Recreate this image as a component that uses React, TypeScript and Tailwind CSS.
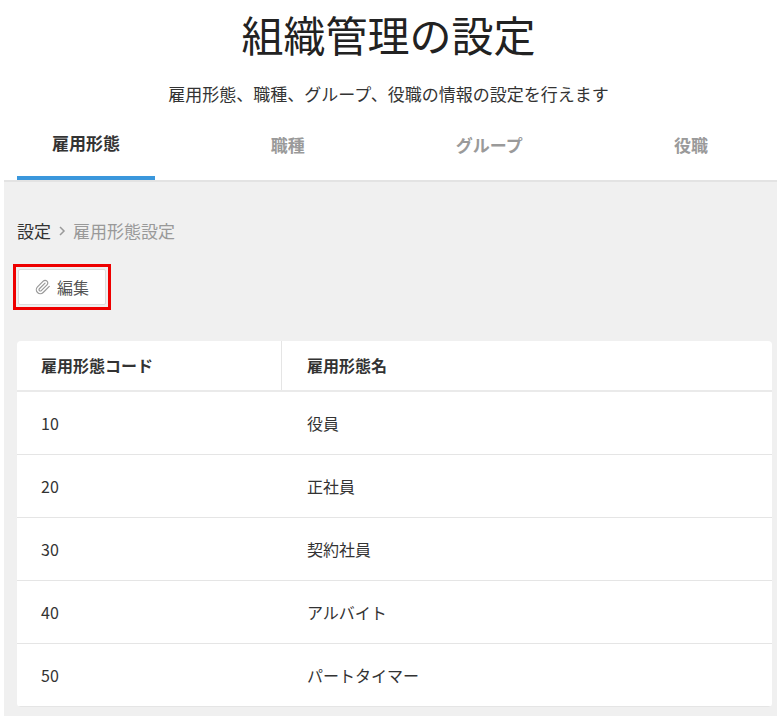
const rows = [
  ["10", "役員"],
  ["20", "正社員"],
  ["30", "契約社員"],
  ["40", "アルバイト"],
  ["50", "パートタイマー"],
];

const tabs = ["雇用形態", "職種", "グループ", "役職"];

export default function App() {
  return (
    <div
      className="h-[716px] w-[777px] overflow-hidden bg-white text-[#333]"
      style={{ fontFamily: '"Noto Sans CJK JP", "Noto Sans", sans-serif' }}
    >
      <h1 className="pt-[8px] text-center text-[42px] leading-[52px] text-[#222]">組織管理の設定</h1>
      <p className="mt-[22px] text-center text-[17px] leading-[24px] text-[#333]">
        雇用形態、職種、グループ、役職の情報の設定を行えます
      </p>
      <div className="mt-[14px] flex justify-between px-[17px]">
        {tabs.map((t, i) => (
          <div
            key={t}
            className={`flex h-[60px] w-[138px] items-center justify-center pb-[10px] text-[17px] font-bold ${
              i === 0 ? "border-b-[4px] border-[#3a97dc] text-[#333]" : "text-[#9a9a9a]"
            }`}
          >
            {t}
          </div>
        ))}
      </div>
      <div className="ml-[4px] h-full border-t-2 border-[#e3e3e3] bg-[#f0f0f0] pl-[9px]">
        <div className="ml-[4px] mt-[36px] flex items-center gap-[6px] text-[17px]">
          <span className="text-[#333]">設定</span>
          <svg width="10" height="14" viewBox="0 0 10 14" fill="none" stroke="#999" strokeWidth="1.5">
            <path d="M3 3l4 4-4 4" />
          </svg>
          <span className="text-[#999]">雇用形態設定</span>
        </div>
        <div className="mt-[20px] inline-block border-[3px] border-[#ee0000] p-[2px]">
          <button className="flex h-[36px] w-[88px] items-center justify-center gap-[6px] rounded-[2px] border border-[#ddd] bg-white text-[16px] text-[#555]">
            <svg width="16" height="16" viewBox="0 0 24 24" fill="none" stroke="#999" strokeWidth="1.8" strokeLinecap="round" strokeLinejoin="round">
              <path d="m21.44 11.05-9.19 9.19a6 6 0 0 1-8.49-8.49l8.57-8.57A4 4 0 1 1 18 8.84l-8.59 8.57a2 2 0 0 1-2.83-2.83l8.49-8.48" />
            </svg>
            編集
          </button>
        </div>
        <div className="ml-[4px] mr-[5px] mt-[31px] overflow-hidden rounded-[4px] bg-white">
          <div className="flex h-[51px] items-center border-b-2 border-[#eaeaea] text-[16px] font-bold text-[#333]">
            <div className="flex h-full w-[265px] items-center border-r border-[#e5e5e5] pl-[24px]">雇用形態コード</div>
            <div className="pl-[25px]">雇用形態名</div>
          </div>
          {rows.map(([c, n]) => (
            <div key={c} className="flex h-[63px] items-center border-b border-[#e5e5e5] text-[16px]">
              <div className="w-[265px] pl-[24px]">{c}</div>
              <div className="pl-[25px]">{n}</div>
            </div>
          ))}
        </div>
      </div>
    </div>
  );
}
